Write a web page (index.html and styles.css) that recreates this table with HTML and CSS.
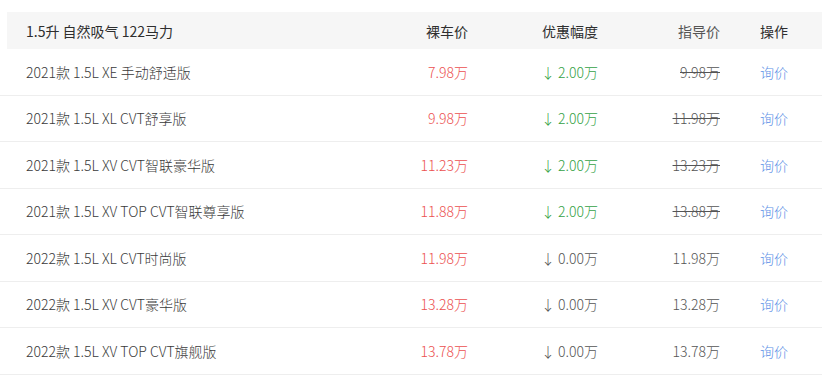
FILE: index.html
```html
<!DOCTYPE html>
<html lang="zh-CN">
<head>
<meta charset="utf-8">
<title>车型报价</title>
<link rel="stylesheet" href="styles.css">
</head>
<body>
<div class="table">
  <div class="head">
    <div class="c-name">1.5升 自然吸气 122马力</div>
    <div class="c-price">裸车价</div>
    <div class="c-disc">优惠幅度</div>
    <div class="c-guide">指导价</div>
    <div class="c-op">操作</div>
  </div>
  <div class="row">
    <div class="c-name">2021款 1.5L XE 手动舒适版</div>
    <div class="c-price red">7.98万</div>
    <div class="c-disc green">↓ 2.00万</div>
    <div class="c-guide"><s>9.98万</s></div>
    <div class="c-op"><a class="link">询价</a></div>
  </div>
  <div class="row">
    <div class="c-name">2021款 1.5L XL CVT舒享版</div>
    <div class="c-price red">9.98万</div>
    <div class="c-disc green">↓ 2.00万</div>
    <div class="c-guide"><s>11.98万</s></div>
    <div class="c-op"><a class="link">询价</a></div>
  </div>
  <div class="row">
    <div class="c-name">2021款 1.5L XV CVT智联豪华版</div>
    <div class="c-price red">11.23万</div>
    <div class="c-disc green">↓ 2.00万</div>
    <div class="c-guide"><s>13.23万</s></div>
    <div class="c-op"><a class="link">询价</a></div>
  </div>
  <div class="row">
    <div class="c-name">2021款 1.5L XV TOP CVT智联尊享版</div>
    <div class="c-price red">11.88万</div>
    <div class="c-disc green">↓ 2.00万</div>
    <div class="c-guide"><s>13.88万</s></div>
    <div class="c-op"><a class="link">询价</a></div>
  </div>
  <div class="row">
    <div class="c-name">2022款 1.5L XL CVT时尚版</div>
    <div class="c-price red">11.98万</div>
    <div class="c-disc gray">↓ 0.00万</div>
    <div class="c-guide">11.98万</div>
    <div class="c-op"><a class="link">询价</a></div>
  </div>
  <div class="row">
    <div class="c-name">2022款 1.5L XV CVT豪华版</div>
    <div class="c-price red">13.28万</div>
    <div class="c-disc gray">↓ 0.00万</div>
    <div class="c-guide">13.28万</div>
    <div class="c-op"><a class="link">询价</a></div>
  </div>
  <div class="row">
    <div class="c-name">2022款 1.5L XV TOP CVT旗舰版</div>
    <div class="c-price red">13.78万</div>
    <div class="c-disc gray">↓ 0.00万</div>
    <div class="c-guide">13.78万</div>
    <div class="c-op"><a class="link">询价</a></div>
  </div>
</div>
</body>
</html>
```
FILE: styles.css
```css
html, body {
  margin: 0;
  padding: 0;
  background: #ffffff;
}
body {
  font-family: "Noto Sans CJK SC", "Noto Sans", sans-serif;
  font-size: 14px;
  font-weight: 300;
  color: #333333;
}
.table {
  width: 822px;
  padding-top: 12px;
}
.head, .row {
  display: grid;
  grid-template-columns: 1fr 88px 130px 122px 102px;
  align-items: center;
  box-sizing: border-box;
}
.head {
  margin-left: 7px;
  padding-left: 19px;
  height: 37px;
  background: #f6f6f6;
  color: #2e2e2e;
  font-weight: 400;
}
.row {
  padding-left: 26px;
  height: 46.5px;
  border-bottom: 1px solid #eeeeee;
  color: #3a3a3a;
}
.c-price, .c-disc, .c-guide {
  text-align: right;
}
.c-op {
  padding-left: 40px;
}
.c-guide {
  color: #555555;
}
.red { color: #ec5050; }
.green { color: #35a246; }
.gray { color: #555555; }
.link {
  color: #5b8fe6;
  cursor: pointer;
}
s {
  text-decoration-thickness: 1px;
}
```
